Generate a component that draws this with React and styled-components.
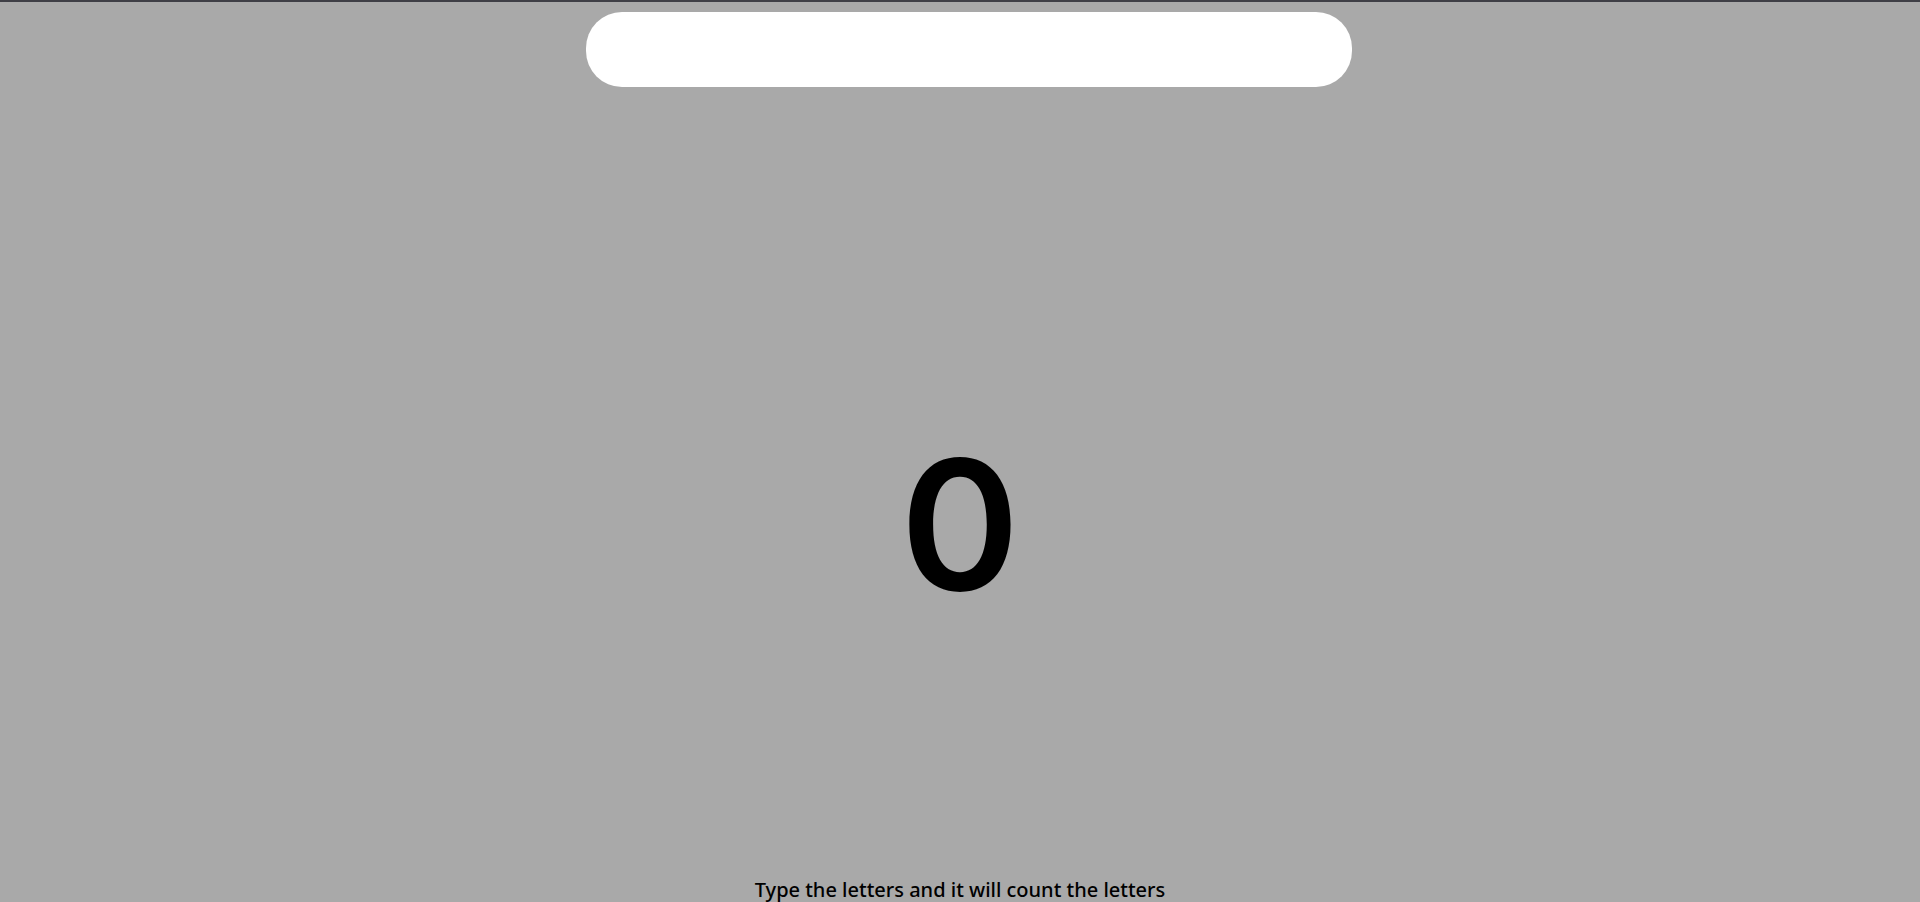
import styled, { createGlobalStyle } from "styled-components";
import { useState } from "react";

const GlobalStyle = createGlobalStyle`
    html, body {
        margin: 0;
        padding: 0;
        background-color: #a9a9a9;
    }
    body {
        border-top: 2px solid #3f3f46;
        font-family: "Noto Sans", "Open Sans", sans-serif;
    }
`;

export default function App() {
    const [text, setText] = useState("");

    return (
        <>
            <GlobalStyle />
            <Wrapper>
                <TextInput
                    value={text}
                    onChange={(e) => setText(e.target.value)}
                />
                <Counter>{text.length}</Counter>
                <Caption>Type the letters and it will count the letters</Caption>
            </Wrapper>
        </>
    );
}

const Wrapper = styled.div`
    display: flex;
    flex-direction: column;
    align-items: center;
    padding-top: 10px;
`;

const TextInput = styled.input`
    width: 766px;
    height: 75px;
    margin-left: 18px;
    box-sizing: border-box;
    border: none;
    outline: none;
    border-radius: 36px;
    background-color: white;
    padding: 0 36px;
    font-size: 24px;
    font-family: "Noto Sans", sans-serif;
`;

const Counter = styled.div`
    margin-top: 347px;
    font-family: Inter, "Noto Sans", sans-serif;
    font-size: 181px;
    font-weight: 600;
    line-height: 1;
    color: black;
`;

const Caption = styled.p`
    margin: 261px 0 0;
    font-size: 20px;
    font-weight: 500;
    color: black;
`;
